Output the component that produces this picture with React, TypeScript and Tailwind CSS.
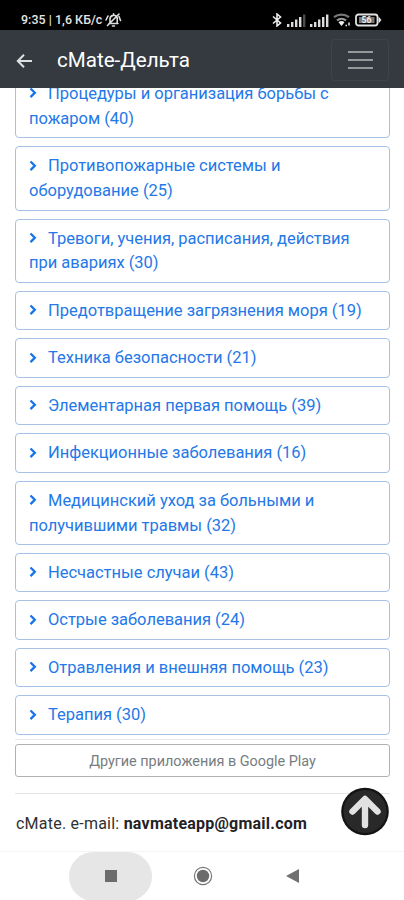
import React from "react";

const topics: string[][] = [
  ["Процедуры и организация борьбы с", "пожаром (40)"],
  ["Противопожарные системы и", "оборудование (25)"],
  ["Тревоги, учения, расписания, действия", "при авариях (30)"],
  ["Предотвращение загрязнения моря (19)"],
  ["Техника безопасности (21)"],
  ["Элементарная первая помощь (39)"],
  ["Инфекционные заболевания (16)"],
  ["Медицинский уход за больными и", "получившими травмы (32)"],
  ["Несчастные случаи (43)"],
  ["Острые заболевания (24)"],
  ["Отравления и внешняя помощь (23)"],
  ["Терапия (30)"],
];

function Signal({ dimLast }: { dimLast?: boolean }) {
  return (
    <svg width="19" height="13" viewBox="0 0 19 13" fill="#dcdcdc">
      <rect x="0" y="10" width="2.4" height="3" />
      <rect x="4" y="8" width="2.4" height="5" />
      <rect x="8" y="5.5" width="2.4" height="7.5" />
      <rect x="12" y="3" width="2.4" height="10" />
      <rect x="16" y="0.5" width="2.4" height="12.5" fill={dimLast ? "#4b4b4b" : "#dcdcdc"} />
    </svg>
  );
}

function StatusBar() {
  return (
    <div className="flex h-[30px] shrink-0 items-center bg-black pt-[10px] pr-[22px] pl-[21px] text-[#e4e4e4]">
      <span className="text-[12.4px] leading-[18px] font-medium tracking-[0.05px] whitespace-nowrap">9:35 | 1,6 КБ/с</span>
      <svg className="ml-[3px]" width="17" height="16" viewBox="0 0 17 16" fill="none" stroke="#dedede" strokeWidth="1.6" strokeLinecap="round">
        <path d="M4 11.5h9M5 11V7a3.7 3.7 0 0 1 7.2-1.2V11M7.5 14h2M8.6 3V1.8M1 8 3 4M14 4.5l1.5 4M2.5 13.5 14 2" />
      </svg>
      <div className="ml-auto flex items-center">
        <svg width="10" height="14" viewBox="0 0 10 14" fill="none" stroke="#eee" strokeWidth="1.6">
          <path d="M1 3.5 8.5 10 5 13V1l3.5 3L1 10.5" />
        </svg>
        <div className="ml-[5px] flex gap-1">
          <Signal dimLast />
          <Signal />
        </div>
        <svg className="ml-[4px]" width="18" height="14" viewBox="0 0 18 14" fill="none" strokeWidth="2.2">
          <path d="M1 4.2a12 12 0 0 1 15 0" stroke="#777" />
          <path d="M4 7.5a7 7 0 0 1 9 0" stroke="#999" />
          <path d="m5.5 9.3 3 3.7 3-3.7a4.5 4.5 0 0 0-6 0Z" fill="#eee" />
          <path d="M12.5 12.5h1.5M16 9.5v3" stroke="#eee" strokeWidth="1.5" />
        </svg>
        <svg className="ml-[4px]" width="27" height="14" viewBox="0 0 27 14" fill="none">
          <rect x="1" y="1.5" width="21.5" height="11" rx="2.5" stroke="#e2e2e2" strokeWidth="1.8" />
          <path d="M23.5 3.5 26.5 7l-3 3.5Z" fill="#e2e2e2" />
          <rect x="4" y="4" width="15.5" height="6" fill="#777" />
          <text x="11.5" y="10" textAnchor="middle" fontSize="8.5" fontWeight="700" fill="#eee">56</text>
        </svg>
      </div>
    </div>
  );
}

function Header() {
  return (
    <header className="flex h-[58px] shrink-0 items-center bg-[#343a40] pr-[15px] pl-[16px]">
      <svg className="mt-[3px]" width="17" height="16" viewBox="0 0 17 16" fill="none" stroke="#dfe0e1" strokeWidth="2">
        <path d="M16 8H2.2M8 1.8 1.8 8 8 14.2" />
      </svg>
      <h1 className="mt-[1px] ml-[24px] text-[20.6px] leading-[30px] whitespace-nowrap text-white">cMate-Дельта</h1>
      <div className="mt-[2px] ml-auto flex h-[42px] w-[58px] flex-col items-center justify-center gap-[6px] rounded border border-[#3e444a]">
        <i className="h-[2px] w-[25px] bg-[#95999c]" />
        <i className="h-[2px] w-[25px] bg-[#95999c]" />
        <i className="h-[2px] w-[25px] bg-[#95999c]" />
      </div>
    </header>
  );
}

function Topic({ lines }: { lines: string[] }) {
  return (
    <div className="rounded-[4px] border border-[#a5c2e4] px-[13px] pt-[7px] pb-[5.6px] text-[16.5px] leading-[24.9px] tracking-[-0.02px] whitespace-nowrap text-[#2478e8]">
      <div className="flex items-center">
        <svg className="-mt-[2px] mr-[10px] shrink-0" width="9" height="12" viewBox="0 0 9 12" fill="none" stroke="#1673ee" strokeWidth="2.3">
          <path d="m1.5 1.5 4.3 4.3-4.3 4.3" />
        </svg>
        <span>{lines[0]}</span>
      </div>
      {lines[1] && <div>{lines[1]}</div>}
    </div>
  );
}

export default function App() {
  return (
    <div className="flex h-[900px] w-[404px] flex-col overflow-hidden bg-white font-['Roboto','Liberation_Sans',sans-serif]">
      <StatusBar />
      <Header />
      <main className="relative h-[763px] shrink-0 overflow-hidden pr-[14px] pl-[15px]">
        <div className="-mt-[14.2px] flex flex-col gap-[7.95px]">
          {topics.map((lines) => (
            <Topic key={lines[0]} lines={lines} />
          ))}
        </div>
        <div className="mt-[4px] h-px bg-[#e9e9e9]" />
        <div className="mt-[4px] flex h-[33px] items-center justify-center rounded-[3px] border border-[#b1b1b1] pt-[3px] text-[14.4px] leading-[20px] text-[#777d82]">
          Другие приложения в Google Play
        </div>
        <div className="mt-[16px] h-px bg-[#e5e5e5]" />
        <p className="mt-[17px] ml-[1px] text-[16px] leading-[25px] tracking-[0.23px] whitespace-nowrap text-[#303030]">
          cMate. e-mail: <b className="font-bold text-[#1f2226]">navmateapp@gmail.com</b>
        </p>
        <svg className="absolute top-[699px] left-[341px]" width="49" height="49" viewBox="0 0 49 49" fill="none">
          <circle cx="24" cy="24.5" r="23.8" fill="#141414" />
          <circle cx="24" cy="24.5" r="21.5" fill="#292929" />
          <path d="M24 38V14M11.5 24.5 24 12l12.5 12.5" stroke="#e2e2e2" strokeWidth="6.4" strokeLinecap="round" strokeLinejoin="round" />
        </svg>
      </main>
      <nav className="flex h-[49px] shrink-0 items-center border-t border-[#f5f5f5] pl-[69px]">
        <div className="flex h-[49px] w-[83px] items-center justify-center rounded-full bg-[#e6e6e6]">
          <i className="h-[12px] w-[12px] bg-[#6c6c6c]" />
        </div>
        <svg className="ml-[41px]" width="20" height="20" viewBox="0 0 20 20">
          <circle cx="10" cy="10" r="8.6" fill="none" stroke="#777" strokeWidth="1.2" />
          <circle cx="10" cy="10" r="6.2" fill="#6c6c6c" />
        </svg>
        <svg className="ml-[73px]" width="14" height="14" viewBox="0 0 14 14">
          <path d="M0 7 13 0v14Z" fill="#707070" />
        </svg>
      </nav>
    </div>
  );
}
